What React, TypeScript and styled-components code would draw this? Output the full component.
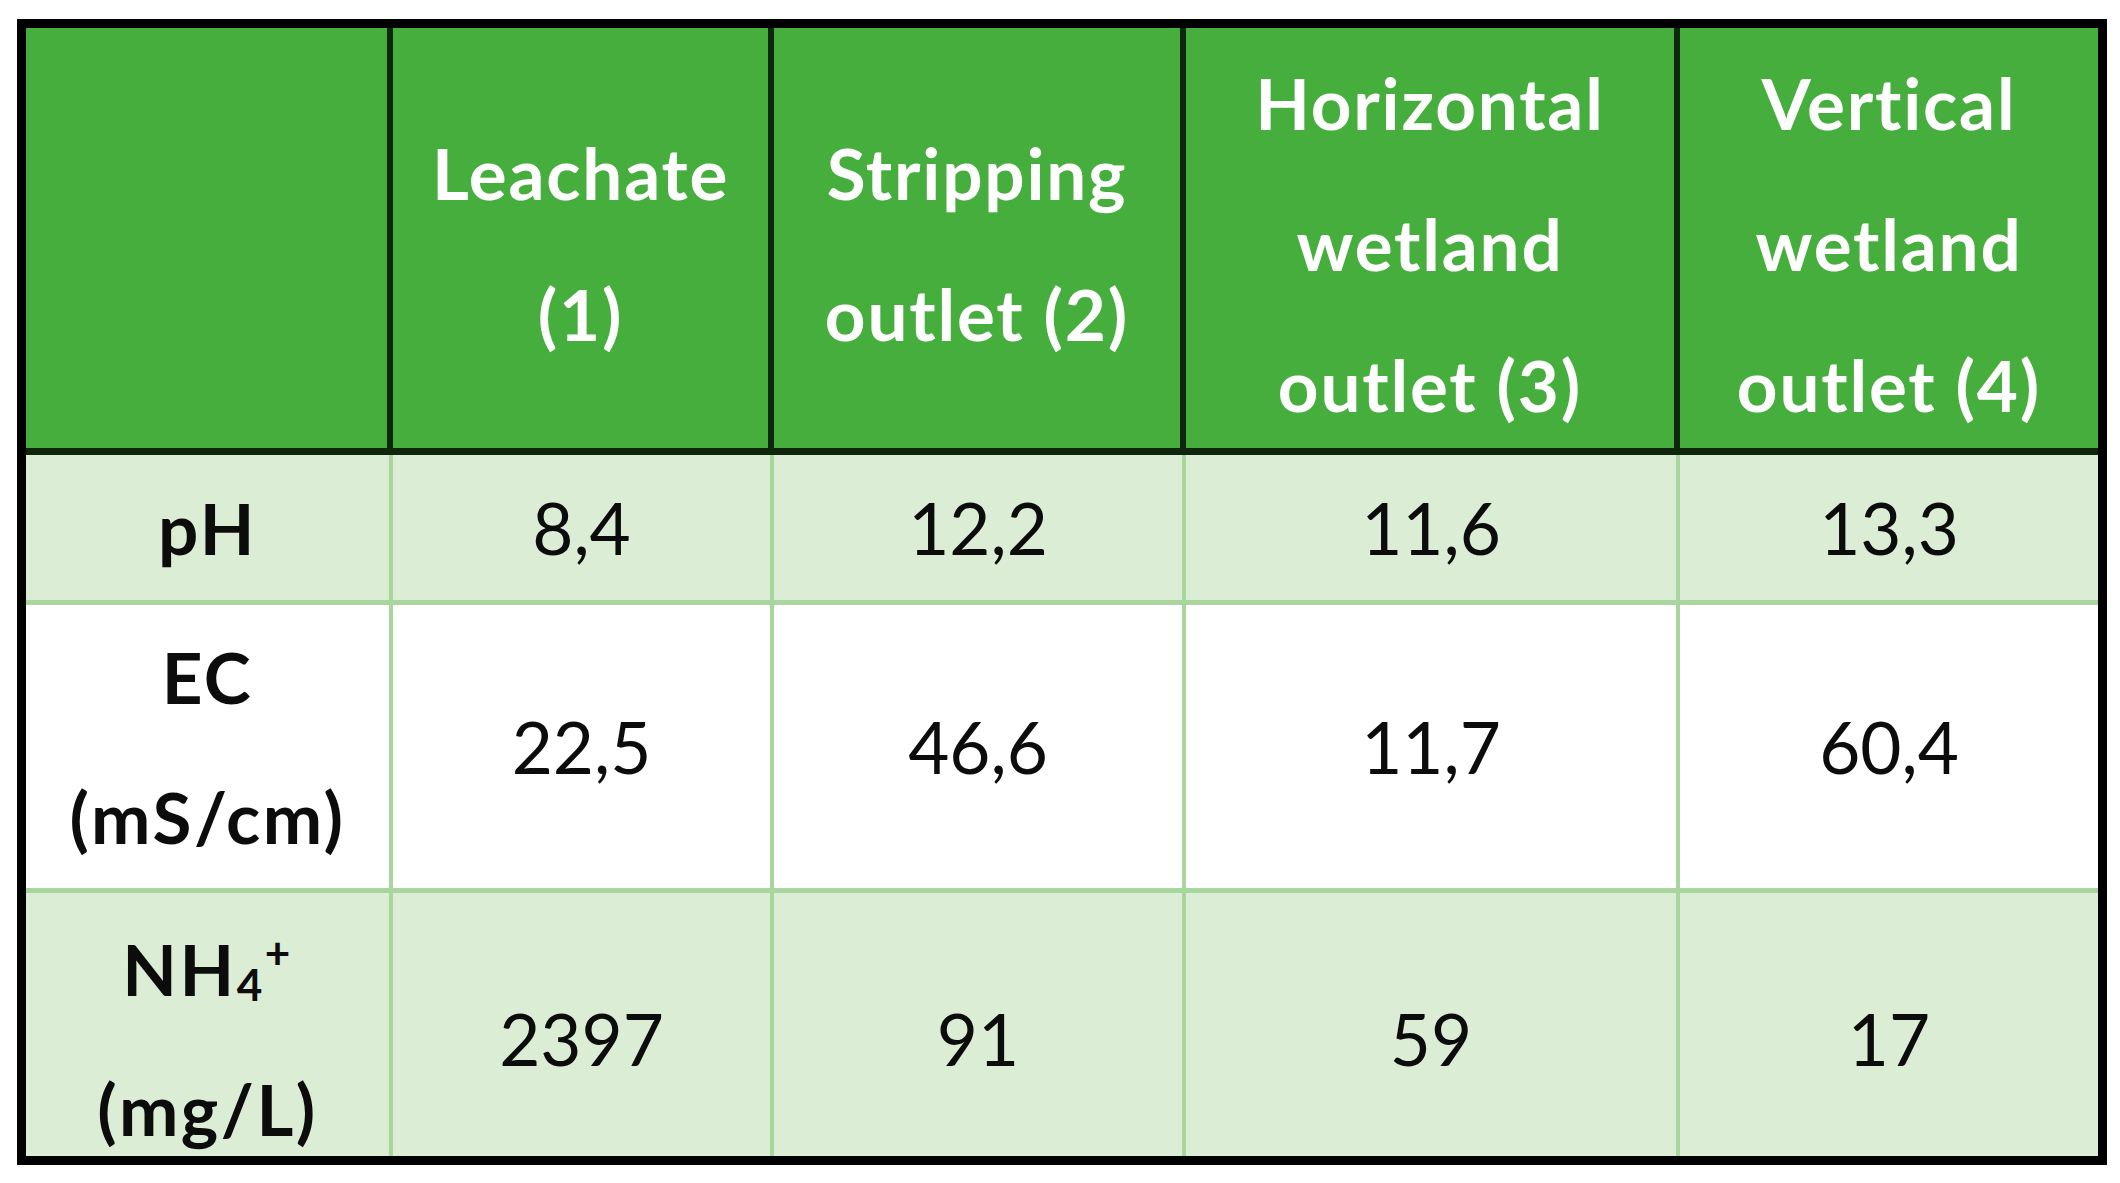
import React from "react";
import styled, { createGlobalStyle } from "styled-components";

type Row = {
  label: React.ReactNode;
  values: string[];
  shaded: boolean;
  height: number;
};

const GlobalStyle = createGlobalStyle`
  html, body {
    margin: 0;
    padding: 0;
    background: #ffffff;
  }
  body {
    font-family: Lato, "Open Sans", "Liberation Sans", sans-serif;
  }
`;

const Page = styled.div`
  width: 2120px;
  height: 1183px;
  padding: 19px 0 0 17px;
  box-sizing: border-box;
  background: #ffffff;
`;

const Frame = styled.div`
  width: 2090px;
  height: 1146px;
  box-sizing: border-box;
  border: 9px solid #000000;
  overflow: hidden;
`;

const Grid = styled.div`
  display: grid;
  grid-template-columns: 367px 381px 412px 494px 418px;
`;

const HeadCell = styled.div<{ $last?: boolean }>`
  height: 427px;
  box-sizing: border-box;
  padding-top: 10px;
  background: #45ae3c;
  border-bottom: 7px solid #0e260b;
  border-right: ${({ $last }) => ($last ? "none" : "6px solid #0e260b")};
  display: flex;
  flex-direction: column;
  align-items: center;
  justify-content: center;
  color: #ffffff;
  font-weight: 700;
  font-size: 71px;
  line-height: 141px;
  letter-spacing: 1.8px;
  text-align: center;
`;

const BodyCell = styled.div<{ $shaded: boolean; $last?: boolean; $h: number }>`
  height: ${({ $h }) => $h}px;
  box-sizing: border-box;
  background: ${({ $shaded }) => ($shaded ? "#dcedd5" : "#ffffff")};
  border-bottom: 5px solid #a8d69c;
  border-right: ${({ $last }) => ($last ? "none" : "4px solid #a8d69c")};
  display: flex;
  flex-direction: column;
  align-items: center;
  justify-content: center;
  color: #0c0c0c;
  font-size: 71px;
  line-height: 140px;
  text-align: center;
`;

const Label = styled.span`
  font-weight: 700;
  letter-spacing: 2.5px;
`;

const Sub = styled.sub`
  font-size: 0.62em;
  line-height: 0;
  vertical-align: -0.12em;
`;

const Sup = styled.sup`
  font-size: 0.62em;
  line-height: 0;
  vertical-align: 0.62em;
`;

const headers: string[][] = [
  [],
  ["Leachate", "(1)"],
  ["Stripping", "outlet (2)"],
  ["Horizontal", "wetland", "outlet (3)"],
  ["Vertical", "wetland", "outlet (4)"],
];

const rows: Row[] = [
  {
    label: <Label>pH</Label>,
    values: ["8,4", "12,2", "11,6", "13,3"],
    shaded: true,
    height: 150,
  },
  {
    label: (
      <>
        <Label>EC</Label>
        <Label>(mS/cm)</Label>
      </>
    ),
    values: ["22,5", "46,6", "11,7", "60,4"],
    shaded: false,
    height: 288,
  },
  {
    label: (
      <>
        <Label>
          NH<Sub>4</Sub>
          <Sup>+</Sup>
        </Label>
        <Label>(mg/L)</Label>
      </>
    ),
    values: ["2397", "91", "59", "17"],
    shaded: true,
    height: 296,
  },
];

const App: React.FC = () => {
  return (
    <Page>
      <GlobalStyle />
      <Frame>
        <Grid>
          {headers.map((lines, i) => (
            <HeadCell key={i} $last={i === headers.length - 1}>
              {lines.map((line) => (
                <span key={line}>{line}</span>
              ))}
            </HeadCell>
          ))}
          {rows.map((row, r) => (
            <React.Fragment key={r}>
              <BodyCell $shaded={row.shaded} $h={row.height}>
                {row.label}
              </BodyCell>
              {row.values.map((v, i) => (
                <BodyCell
                  key={i}
                  $shaded={row.shaded}
                  $h={row.height}
                  $last={i === row.values.length - 1}
                >
                  {v}
                </BodyCell>
              ))}
            </React.Fragment>
          ))}
        </Grid>
      </Frame>
    </Page>
  );
};

export default App;
